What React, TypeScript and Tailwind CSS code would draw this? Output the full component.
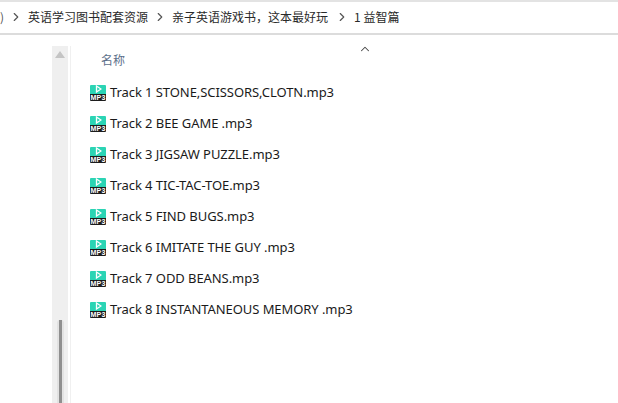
import { ChevronRight, ChevronUp } from "lucide-react";

const tracks = [
  "Track 1 STONE,SCISSORS,CLOTN.mp3",
  "Track 2 BEE GAME .mp3",
  "Track 3 JIGSAW PUZZLE.mp3",
  "Track 4 TIC-TAC-TOE.mp3",
  "Track 5 FIND BUGS.mp3",
  "Track 6 IMITATE THE GUY .mp3",
  "Track 7 ODD BEANS.mp3",
  "Track 8 INSTANTANEOUS MEMORY .mp3",
];

function Mp3Icon() {
  return (
    <span className="flex h-4 w-4 shrink-0 flex-col overflow-hidden rounded-[1px]">
      <span className="flex h-[9px] items-center justify-center bg-[#2bd4b4]">
        <svg width="7" height="8" viewBox="0 0 7 8" fill="none" stroke="#fff" strokeWidth="1.3">
          <path d="M1.5 1 L6 4 L1.5 7 Z" />
        </svg>
      </span>
      <span className="flex h-[7px] items-center justify-center bg-[#1c1c1c] font-['Liberation_Sans',sans-serif] text-[7px] font-bold leading-none tracking-[0.2px] text-white">
        MP3
      </span>
    </span>
  );
}

function Crumb({ children, last }: { children: string; last?: boolean }) {
  return (
    <>
      <ChevronRight size={14} strokeWidth={2} className={last ? "-ml-px -mr-[3px] shrink-0 text-[#555]" : "-mx-[3px] shrink-0 text-[#555]"} />
      <span>{children}</span>
    </>
  );
}

export default function App() {
  return (
    <div className="flex h-[403px] w-[618px] flex-col overflow-hidden bg-white font-['Noto_Sans','Noto_Sans_CJK_SC',sans-serif] text-[13px]">
      <header className="flex h-[35px] shrink-0 items-center gap-[8px] border-y-2 border-t-[#e3e3e3] border-b-[#dcdcdc] pb-px font-['Noto_Sans_CJK_SC',sans-serif] text-[12px] text-[#2a2a2a]">
        <span className="text-[#555]">)</span>
        <Crumb>英语学习图书配套资源</Crumb>
        <Crumb>亲子英语游戏书，这本最好玩</Crumb>
        <Crumb last>1 益智篇</Crumb>
      </header>
      <div className="flex min-h-0 flex-1 pl-[52px] pt-[11px]">
        <aside className="flex w-4 flex-col items-center bg-[#efefef] pt-[5px]">
          <svg width="10" height="7" viewBox="0 0 10 7" className="shrink-0">
            <path d="M5 0 L10 7 L0 7 Z" fill="#c4c4c4" />
          </svg>
          <div className="mt-[262px] flex w-[7px] flex-1 justify-center rounded-t-[3px] bg-[#e2e2e2]">
            <div className="w-[3px] bg-[#8f8f8f]" />
          </div>
        </aside>
        <div className="ml-0.5 w-px bg-[#f0f0f0]" />
        <main className="flex-1">
          <div className="relative h-[31px] pl-[30px] pt-[4px] font-['Noto_Sans_CJK_SC',sans-serif] text-[12px] leading-[20px] text-[#5c6f8a]">
            名称
            <ChevronUp size={14} strokeWidth={1.75} className="absolute left-[287px] top-[-4px] text-[#444]" />
          </div>
          <ul className="flex flex-col">
            {tracks.map((t) => (
              <li key={t} className="flex h-[31px] items-center gap-[4px] pl-[19px] text-[#1a1a1a]">
                <Mp3Icon />
                <span className="whitespace-nowrap tracking-[-0.07px]">{t}</span>
              </li>
            ))}
          </ul>
        </main>
      </div>
    </div>
  );
}
